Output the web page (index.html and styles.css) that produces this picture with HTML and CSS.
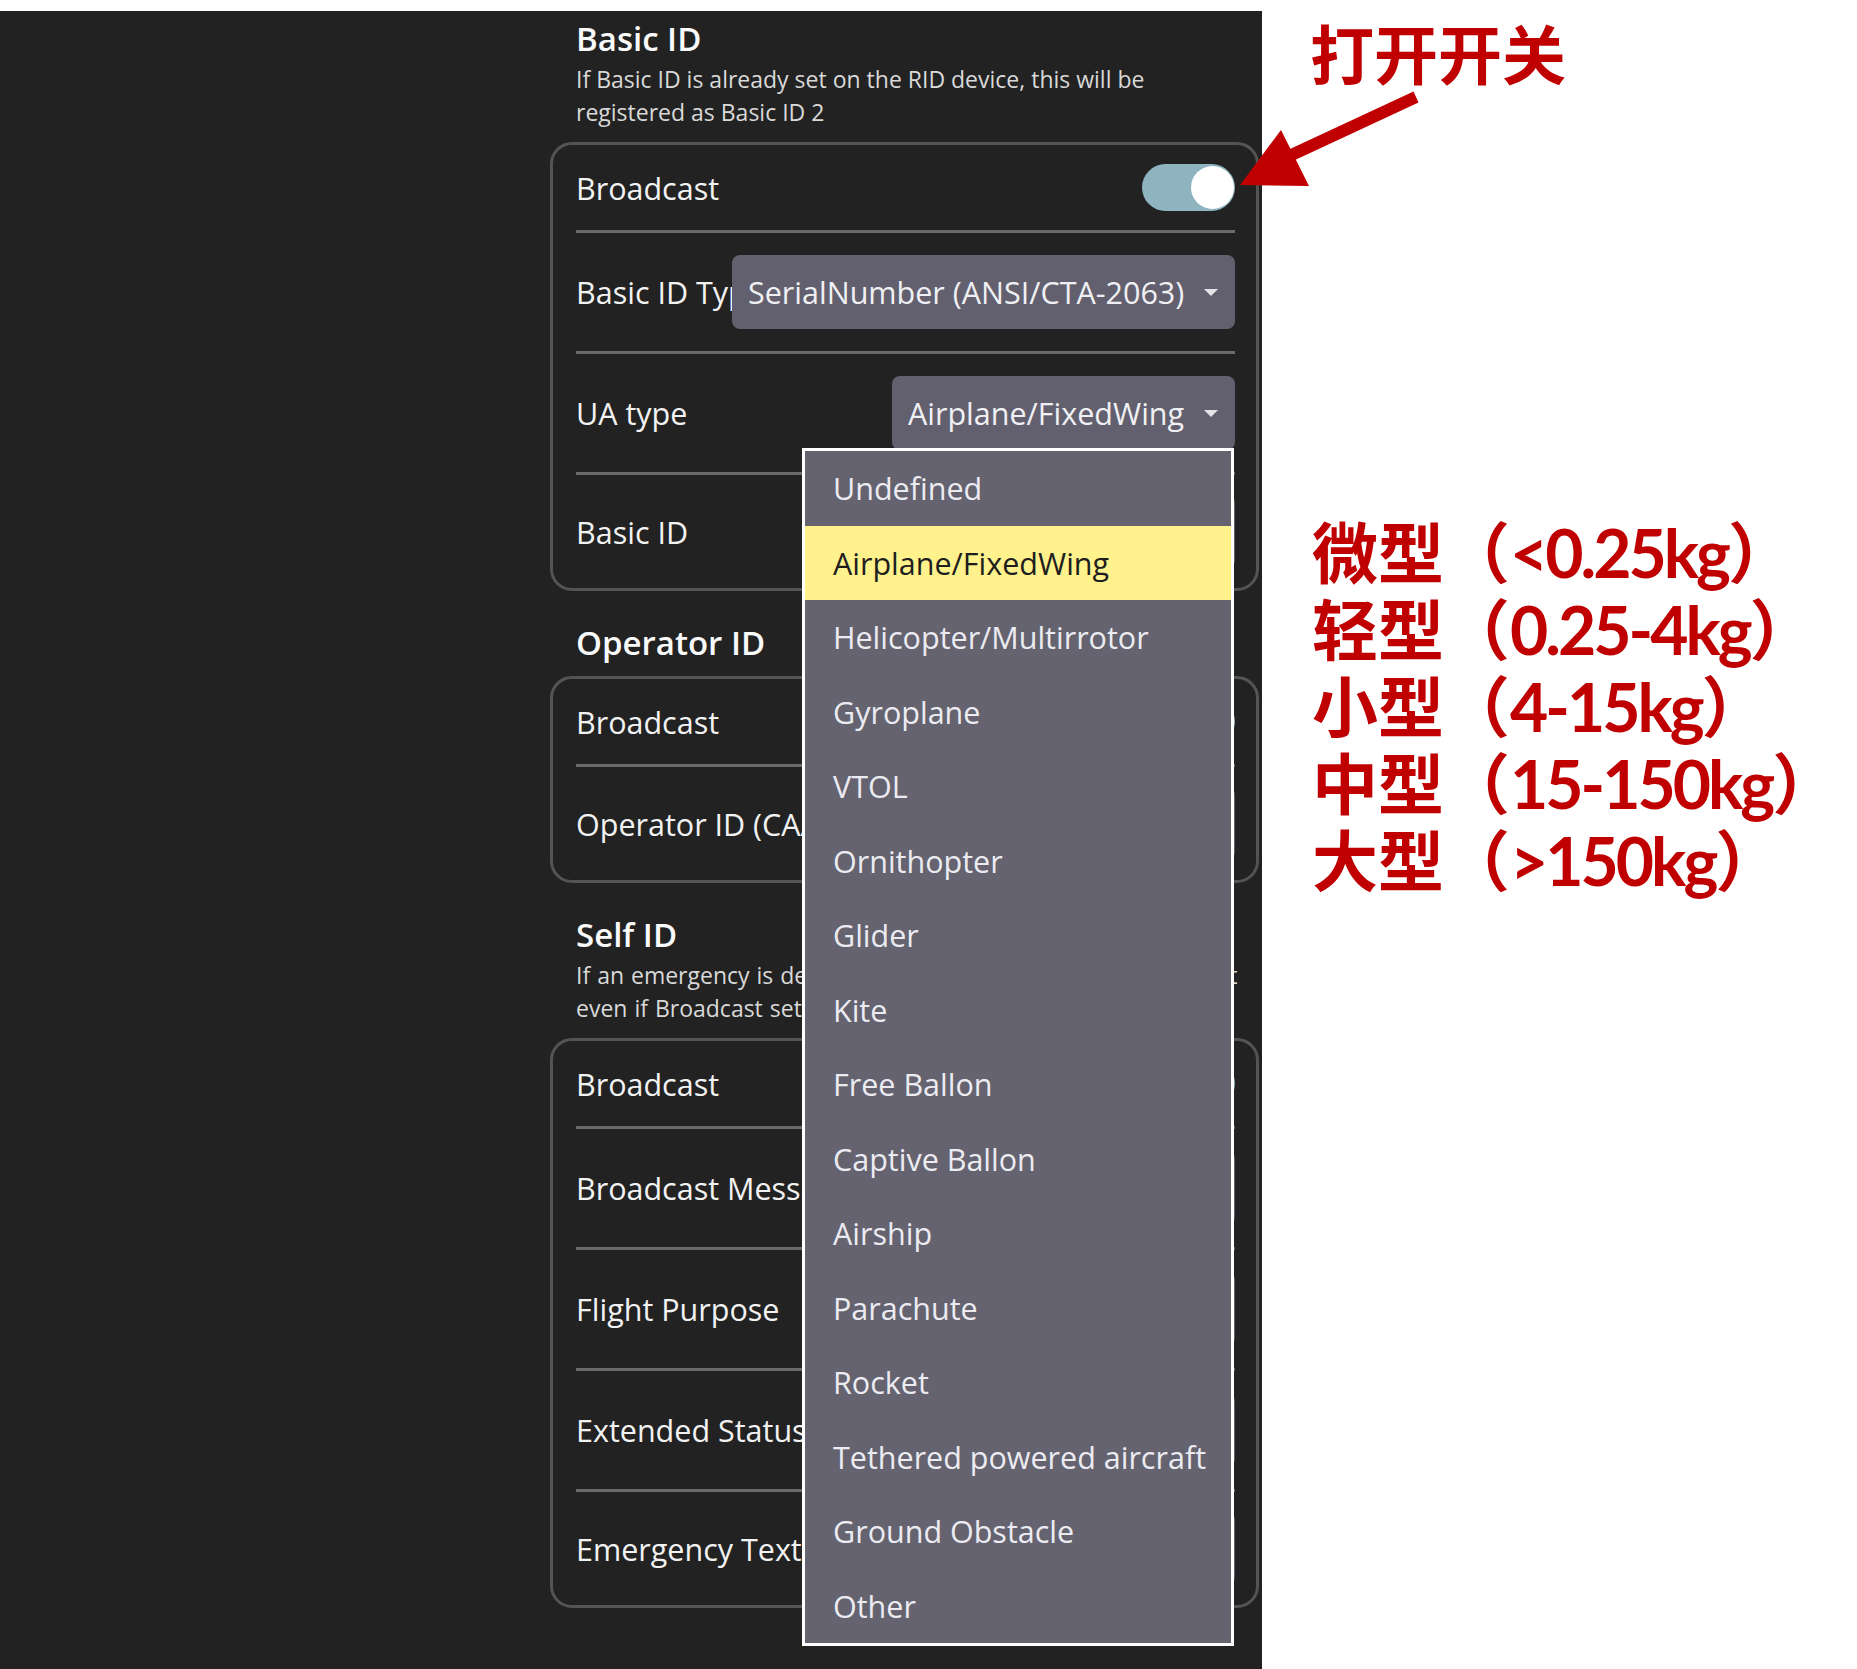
FILE: index.html
```html
<!DOCTYPE html>
<html lang="en">
<head>
    <meta charset="UTF-8">
    <title>Remote ID - UA type</title>
    <link rel="stylesheet" href="styles.css">
</head>
<body>

<div class="page">
    <div class="panel">
        <div class="column">

            <!-- Basic ID -->
            <section class="group">
                <h2>Basic ID</h2>
                <p class="hint">If Basic ID is already set on the RID device, this will be registered as Basic ID 2</p>
                <div class="card">
                    <div class="row row-toggle">
                        <span class="label">Broadcast</span>
                        <span class="toggle"><span class="knob"></span></span>
                    </div>
                    <div class="row row-select">
                        <span class="label clip">Basic ID Type</span>
                        <div class="select select-wide"><span>SerialNumber (ANSI/CTA-2063)</span><i class="caret"></i></div>
                    </div>
                    <div class="row row-select">
                        <span class="label">UA type</span>
                        <div class="select select-ua">
                            <span>Airplane/FixedWing</span><i class="caret"></i>
                            <ul class="dropdown">
                                <li>Undefined</li>
                                <li class="active">Airplane/FixedWing</li>
                                <li>Helicopter/Multirrotor</li>
                                <li>Gyroplane</li>
                                <li>VTOL</li>
                                <li>Ornithopter</li>
                                <li>Glider</li>
                                <li>Kite</li>
                                <li>Free Ballon</li>
                                <li>Captive Ballon</li>
                                <li>Airship</li>
                                <li>Parachute</li>
                                <li>Rocket</li>
                                <li>Tethered powered aircraft</li>
                                <li>Ground Obstacle</li>
                                <li>Other</li>
                            </ul>
                        </div>
                    </div>
                    <div class="row row-input">
                        <span class="label">Basic ID</span>
                        <div class="input"></div>
                    </div>
                </div>
            </section>

            <!-- Operator ID -->
            <section class="group">
                <h2>Operator ID</h2>
                <div class="card">
                    <div class="row row-toggle">
                        <span class="label">Broadcast</span>
                        <span class="toggle"><span class="knob"></span></span>
                    </div>
                    <div class="row row-input">
                        <span class="label clip">Operator ID (CAA)</span>
                        <div class="input"></div>
                    </div>
                </div>
            </section>

            <!-- Self ID -->
            <section class="group">
                <h2>Self ID</h2>
                <p class="hint hint-spaced">If an emergency is declared, the Emergency Text is broadcast even if Broadcast setting is off</p>
                <div class="card">
                    <div class="row row-toggle">
                        <span class="label">Broadcast</span>
                        <span class="toggle"><span class="knob"></span></span>
                    </div>
                    <div class="row row-select">
                        <span class="label clip">Broadcast Message</span>
                        <div class="select select-under"><span>Text</span><i class="caret"></i></div>
                    </div>
                    <div class="row row-select">
                        <span class="label">Flight Purpose</span>
                        <div class="select select-under"><span>Text</span><i class="caret"></i></div>
                    </div>
                    <div class="row row-select">
                        <span class="label clip">Extended Status</span>
                        <div class="select select-under"><span>Text</span><i class="caret"></i></div>
                    </div>
                    <div class="row row-input">
                        <span class="label clip">Emergency Text</span>
                        <div class="input"></div>
                    </div>
                </div>
            </section>

        </div>
    </div>

    <!-- Annotations -->
    <div class="notes">
        <div class="note-title">打开开关</div>
        <div class="note-list">
            <div>微型（<span class="num">&lt;0.25kg</span>）</div>
            <div>轻型（<span class="num">0.25-4kg</span>）</div>
            <div>小型（<span class="num">4-15kg</span>）</div>
            <div>中型（<span class="num">15-150kg</span>）</div>
            <div>大型（<span class="num">&gt;150kg</span>）</div>
        </div>
    </div>

    <svg class="arrow" width="200" height="110" viewBox="0 0 200 110">
        <line x1="186" y1="12" x2="55" y2="73" stroke="#c00000" stroke-width="12"/>
        <polygon points="10,100 51,45 79,101" fill="#c00000"/>
    </svg>
</div>

</body>
</html>
```

FILE: styles.css
```css
body {
    margin: 0;
    background-color: #ffffff;
}

.page {
    position: relative;
    display: flex;
    width: 1857px;
    height: 1669px;
    overflow: hidden;
}

/* Dark settings panel */
.panel {
    flex: 0 0 1262px;
    box-sizing: border-box;
    margin-top: 11px;
    padding: 0 3px 0 550px;
    background-color: #222222;
    color: #f2f2f2;
    font-family: "Open Sans", "Liberation Sans", sans-serif;
}

.column {
    width: 709px;
}

.group h2 {
    margin: 32px 0 0;
    padding-left: 26px;
    font-size: 33px;
    font-weight: 600;
    line-height: 40px;
    color: #fafafa;
}

.group:first-child h2 {
    margin-top: 8px;
}

.hint {
    margin: 4px 0 0;
    padding: 0 8px 0 26px;
    font-size: 23px;
    line-height: 33px;
    color: #d9d9d9;
}

.hint-spaced {
    word-spacing: 1px;
}

.card {
    margin-top: 13px;
    padding: 0 21px 0 23px;
    border: 3px solid #545454;
    border-radius: 22px;
}

.row {
    display: flex;
    align-items: center;
    border-top: 3px solid #6a6a6a;
}

.row:first-child {
    border-top: none;
}

.row-toggle {
    padding: 19px 0;
}

.row-select {
    padding: 22px 0;
}

.row-input {
    padding: 20px 0;
}

.label {
    flex: 1;
    min-width: 0;
    white-space: nowrap;
    font-size: 30.5px;
    line-height: 40px;
}

.label.clip {
    overflow: hidden;
}

.row-toggle .label {
    line-height: 36px;
}

/* Switch */
.toggle {
    position: relative;
    flex: 0 0 93px;
    height: 47px;
    border-radius: 24px;
    background-color: #8db4bf;
}

.toggle .knob {
    position: absolute;
    top: 2px;
    right: 1px;
    width: 43px;
    height: 43px;
    border-radius: 50%;
    background-color: #ffffff;
}

/* Select boxes */
.select {
    position: relative;
    display: flex;
    align-items: center;
    box-sizing: border-box;
    height: 74px;
    padding: 0 17px 0 16px;
    border-radius: 8px;
    background-color: #62606e;
    font-size: 30.5px;
    color: #f0f0f4;
    white-space: nowrap;
}

.select-wide {
    flex: 0 0 503px;
}

.select-ua {
    flex: 0 0 343px;
}

.select-under {
    flex: 0 0 433px;
}

.caret {
    margin-left: auto;
    width: 0;
    height: 0;
    border-left: 7px solid transparent;
    border-right: 7px solid transparent;
    border-top: 7px solid #e4e4e8;
}

.input {
    flex: 0 0 433px;
    height: 73px;
    border-radius: 8px;
    background-color: #62606e;
}

/* Open option list */
.dropdown {
    position: absolute;
    top: calc(100% - 2px);
    right: 1px;
    z-index: 2;
    width: 432px;
    box-sizing: border-box;
    margin: 0;
    padding: 0;
    list-style: none;
    border: 3px solid #ffffff;
    background-color: #64636f;
}

.dropdown li {
    display: flex;
    align-items: center;
    height: 74.5px;
    padding-left: 28px;
    font-size: 30.5px;
    color: #ecebf2;
}

.dropdown li.active {
    background-color: #fff18c;
    color: #1e1e1e;
}

/* Red annotations */
.notes {
    flex: 1;
    padding: 19px 0 0 48px;
    font-family: "Noto Sans CJK SC", sans-serif;
    font-weight: 700;
    color: #c00000;
}

.note-title {
    font-size: 64px;
    line-height: 64px;
}

.note-list {
    margin-top: 428px;
    padding-left: 2px;
    font-size: 66px;
    white-space: nowrap;
}

.note-list div {
    height: 77px;
    line-height: 77px;
}

.note-list .num {
    font-family: Lato, "Open Sans", sans-serif;
    letter-spacing: -3px;
    line-height: 1;
}

.arrow {
    position: absolute;
    left: 1230px;
    top: 85px;
    z-index: 3;
}
```
